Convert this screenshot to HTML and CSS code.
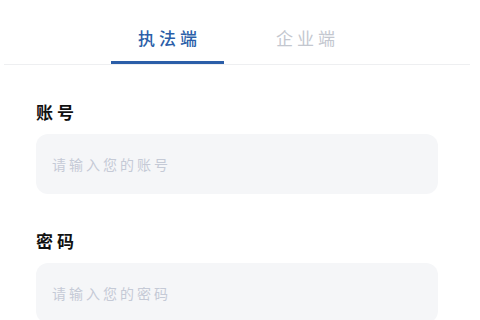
FILE: index.html
```html
<!DOCTYPE html>
<html lang="zh-CN">
  <head>
    <meta charset="UTF-8" />
    <meta name="viewport" content="width=device-width, initial-scale=1.0" />
    <link rel="stylesheet" href="styles.css">
    <title>登录</title>
  </head>
  <body>
    <div class="tabs">
      <div class="tab active">执法端</div>
      <div class="tab">企业端</div>
    </div>
    <form class="login-form">
      <div class="field">
        <label class="field-label" for="account">账号</label>
        <input class="field-input" id="account" type="text" placeholder="请输入您的账号" />
      </div>
      <div class="field">
        <label class="field-label" for="password">密码</label>
        <input class="field-input" id="password" type="password" placeholder="请输入您的密码" />
      </div>
    </form>
  </body>
</html>
```

FILE: styles.css
```css
*,
*::after,
*::before {
  box-sizing: border-box;
}

body {
  margin: 0;
  background: #fff;
  font-family: "Noto Sans CJK SC", sans-serif;
  overflow: hidden;
}

.tabs {
  display: flex;
  gap: 25px;
  height: 65px;
  margin: 0 10px 0 4px;
  padding-left: 107px;
  border-bottom: 1px solid #eeeff1;
}

.tab {
  width: 113px;
  height: 64px;
  padding-top: 26px;
  line-height: 24px;
  font-size: 17px;
  letter-spacing: 4px;
  text-indent: 4px;
  text-align: center;
  color: #c3c7cf;
  border-bottom: 3px solid transparent;
  cursor: pointer;
}

.tab.active {
  color: #2b5ea8;
  font-weight: 500;
  border-bottom-color: #2b5ea8;
}

.login-form {
  padding: 35px 42px 0 36px;
}

.field + .field {
  margin-top: 35px;
}

.field-label {
  display: block;
  line-height: 24px;
  font-size: 17px;
  font-weight: 700;
  letter-spacing: 4px;
  color: #111;
  margin-bottom: 10px;
}

.field-input {
  display: block;
  width: 100%;
  height: 60px;
  padding: 0 16px;
  border: none;
  border-radius: 12px;
  background: #f5f6f8;
  font-family: inherit;
  font-size: 14px;
  letter-spacing: 3px;
  color: #333;
  outline: none;
}

.field-input::placeholder {
  color: #c5cad6;
}
```
